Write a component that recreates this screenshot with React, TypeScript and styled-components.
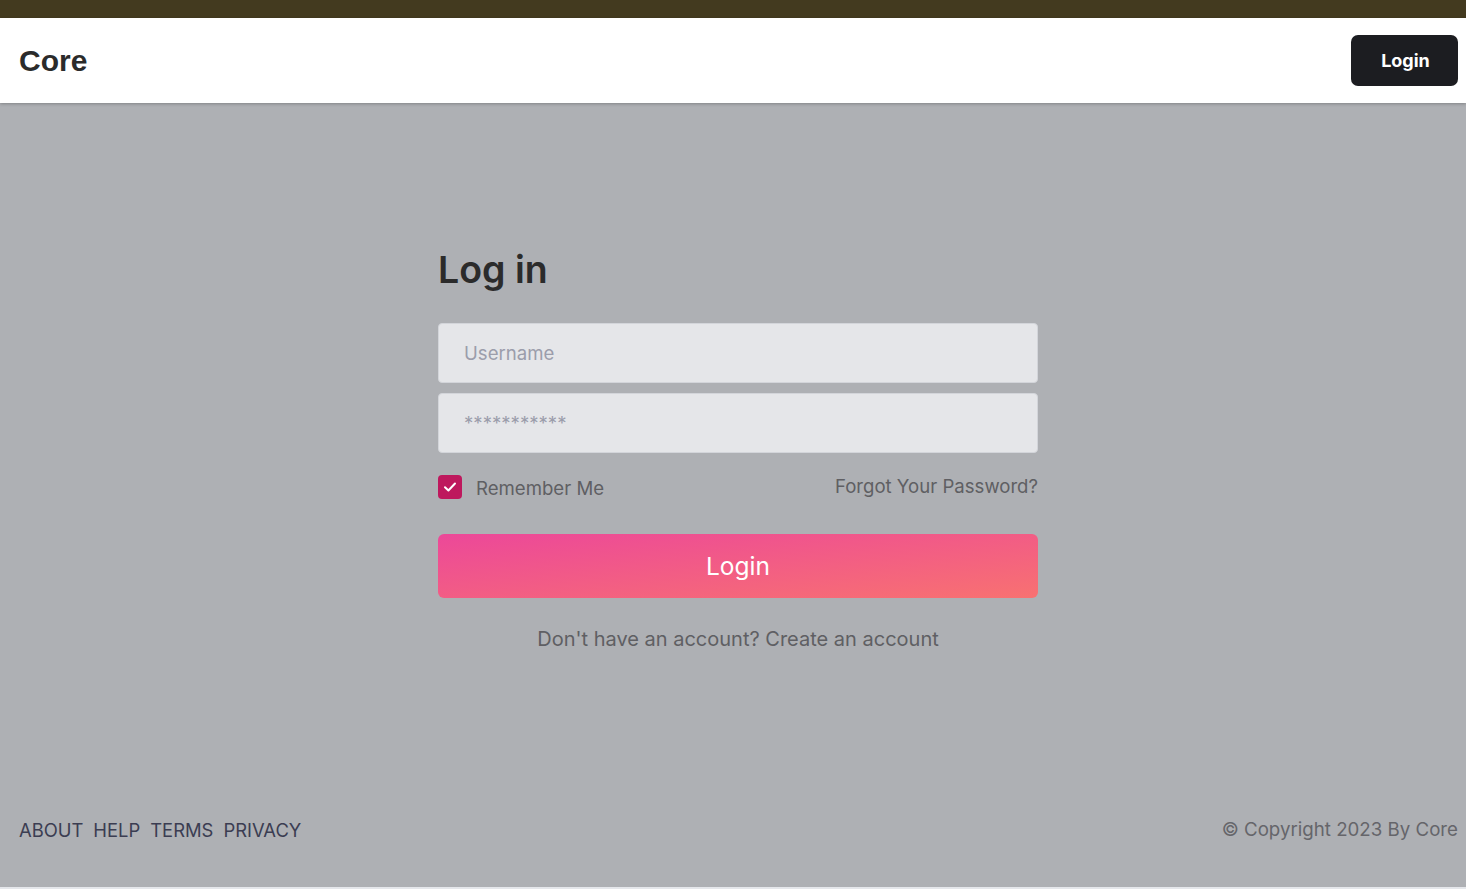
import React from "react";
import styled, { createGlobalStyle } from "styled-components";

const Global = createGlobalStyle`
  html, body { margin: 0; padding: 0; }
  body { font-family: Inter, "Noto Sans", sans-serif; background: #e5e7eb; }
  * { box-sizing: border-box; }
`;

const Page = styled.div`
  display: flex;
  flex-direction: column;
  height: 889px;
`;

const TopStrip = styled.div`
  height: 18px;
  background: #433a1f;
  flex-shrink: 0;
`;

const Header = styled.header`
  height: 85px;
  flex-shrink: 0;
  background: #ffffff;
  display: flex;
  align-items: center;
  justify-content: space-between;
  padding: 0 8px 0 19px;
  box-shadow: 0 1px 3px rgba(0, 0, 0, 0.25);
  position: relative;
  z-index: 1;
`;

const Brand = styled.div`
  font-family: "Liberation Sans", Arial, sans-serif;
  font-weight: 700;
  font-size: 30px;
  color: #2b2b2b;
`;

const HeaderButton = styled.button`
  width: 107px;
  height: 51px;
  border: none;
  border-radius: 7px;
  background: #1c1d21;
  color: #ffffff;
  font-family: Inter, sans-serif;
  font-weight: 700;
  font-size: 18px;
  margin-bottom: 1px;
  padding: 0 0 0 2px;
`;

const Main = styled.main`
  height: 784px;
  flex-shrink: 0;
  background: #aeb0b4;
  display: flex;
  flex-direction: column;
`;

const Center = styled.section`
  flex: 1;
  display: flex;
  justify-content: center;
  padding-left: 10px;
  padding-top: 143px;
`;

const Form = styled.form`
  width: 600px;
  display: flex;
  flex-direction: column;
`;

const Title = styled.h1`
  margin: 0 0 29px 0;
  font-size: 37.5px;
  line-height: 48px;
  font-weight: 600;
  color: #2b2b2b;
`;

const Input = styled.input`
  width: 100%;
  height: 60px;
  border: 1px solid #d3d5da;
  border-radius: 4px;
  background: #e5e6e9;
  padding: 0 25px;
  font-family: Inter, sans-serif;
  font-size: 18.6px;
  color: #333;
  margin-bottom: 10px;
  outline: none;
  &::placeholder { color: #9b9dab; }
`;

const OptionsRow = styled.div`
  display: flex;
  justify-content: space-between;
  align-items: center;
  margin-top: 12px;
  height: 24px;
`;

const CheckLabel = styled.label`
  display: flex;
  align-items: center;
  gap: 14px;
  font-size: 18.6px;
  color: #5f5f63;
  padding-top: 2px;
`;

const CheckBox = styled.span`
  width: 24px;
  height: 24px;
  border-radius: 4px;
  background: #be185d;
  display: inline-flex;
  align-items: center;
  justify-content: center;
  margin-top: -2px;
`;

const ForgotLink = styled.a`
  font-size: 18.6px;
  color: #5f5f63;
  text-decoration: none;
  margin-top: -2px;
`;

const SubmitButton = styled.button`
  margin-top: 35px;
  height: 64px;
  width: 100%;
  border: none;
  border-radius: 6px;
  background: linear-gradient(to bottom right, #ec4899 0%, #f87171 100%);
  color: #ffffff;
  font-family: Inter, sans-serif;
  font-size: 24.5px;
  font-weight: 400;
`;

const SignupText = styled.p`
  margin: 28px 0 0 0;
  text-align: center;
  font-size: 20px;
  line-height: 26px;
  color: #5f5f63;
`;

const Footer = styled.footer`
  display: flex;
  justify-content: space-between;
  align-items: center;
  padding: 0 8px 46px 19px;
  font-size: 18.4px;
  line-height: 22px;
`;

const FooterLinks = styled.nav`
  display: flex;
  gap: 10px;
`;

const FooterLink = styled.a`
  color: #3b3d52;
  text-decoration: none;
`;

const Copyright = styled.span`
  color: #65656a;
  font-size: 18.7px;
`;

export default function App() {
  return (
    <>
      <Global />
      <Page>
        <TopStrip />
        <Header>
          <Brand>Core</Brand>
          <HeaderButton>Login</HeaderButton>
        </Header>
        <Main>
          <Center>
            <Form onSubmit={(e) => e.preventDefault()}>
              <Title>Log in</Title>
              <Input placeholder="Username" />
              <Input placeholder="***********" />
              <OptionsRow>
                <CheckLabel>
                  <CheckBox>
                    <svg width="16" height="16" viewBox="0 0 16 16" fill="none">
                      <path d="M3 8.3 L6.4 11.5 L13 4.5" stroke="#fff" strokeWidth="2" strokeLinecap="round" strokeLinejoin="round" />
                    </svg>
                  </CheckBox>
                  Remember Me
                </CheckLabel>
                <ForgotLink href="#">Forgot Your Password?</ForgotLink>
              </OptionsRow>
              <SubmitButton type="submit">Login</SubmitButton>
              <SignupText>Don't have an account? Create an account</SignupText>
            </Form>
          </Center>
          <Footer>
            <FooterLinks>
              <FooterLink href="#">ABOUT</FooterLink>
              <FooterLink href="#">HELP</FooterLink>
              <FooterLink href="#">TERMS</FooterLink>
              <FooterLink href="#">PRIVACY</FooterLink>
            </FooterLinks>
            <Copyright>© Copyright 2023 By Core</Copyright>
          </Footer>
        </Main>
      </Page>
    </>
  );
}
